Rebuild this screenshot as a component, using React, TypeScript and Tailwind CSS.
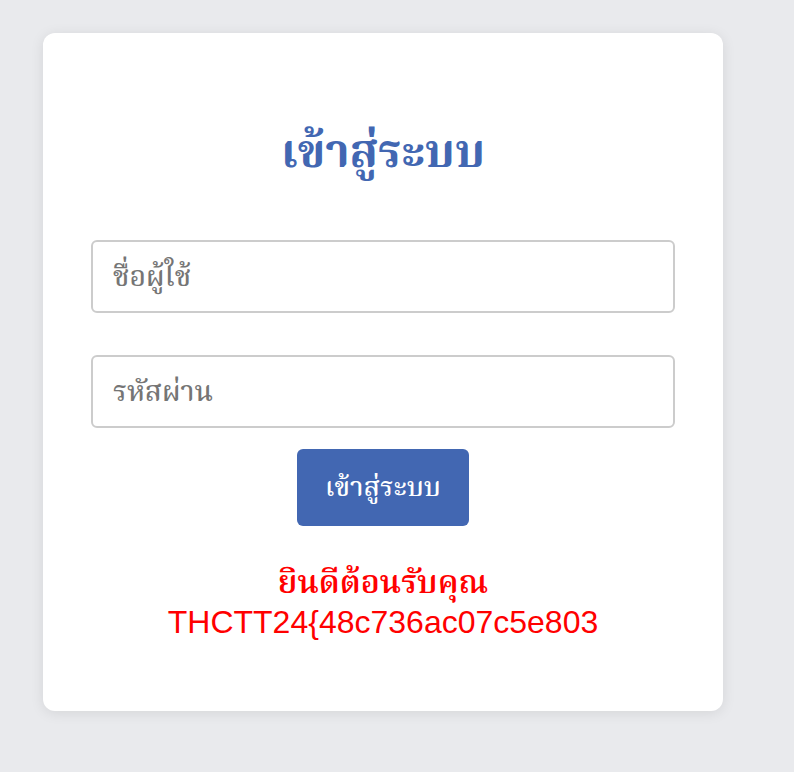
export default function App() {
  return (
    <div className="min-h-screen bg-[#e9eaed] pt-[33px] pl-[43px] font-['Liberation_Sans','Noto_Serif_Thai','Noto_Sans_Thai',sans-serif]">
      <div className="w-[680px] h-[678px] rounded-xl bg-white px-12 pt-[88px] shadow-[0_2px_14px_rgba(0,0,0,0.09)]">
        <h2 className="text-center text-[46px] font-bold leading-[60px] text-[#4267b2]">เข้าสู่ระบบ</h2>
        <form className="mt-[59px] flex flex-col items-center">
          <input
            type="text"
            placeholder="ชื่อผู้ใช้"
            className="h-[73px] w-full rounded-md border-2 border-[#cccccc] px-5 text-[28px] font-medium text-[#333] outline-none placeholder:text-[#757575]"
          />
          <input
            type="password"
            placeholder="รหัสผ่าน"
            className="mt-[42px] h-[73px] w-full rounded-md border-2 border-[#cccccc] px-5 text-[28px] font-medium text-[#333] outline-none placeholder:text-[#757575]"
          />
          <button
            type="button"
            className="mt-[21px] h-[77px] w-[172px] rounded-md bg-[#4267b2] text-[27px] font-medium text-white"
          >
            เข้าสู่ระบบ
          </button>
        </form>
        <p className="mt-[36px] text-center text-[32px] leading-[40px] text-[#ff0000]">
          <span className="font-semibold">ยินดีต้อนรับคุณ</span>
          <br />
          THCTT24{"{"}48c736ac07c5e803
        </p>
      </div>
    </div>
  );
}
